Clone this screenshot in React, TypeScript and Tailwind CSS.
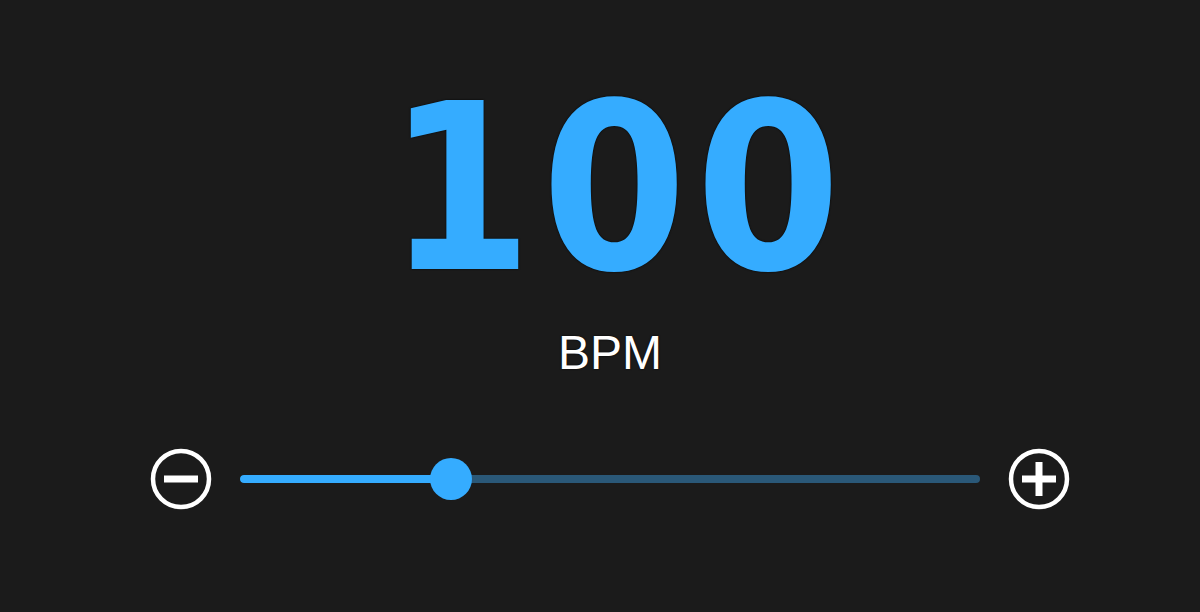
import React from "react";

export default function App() {
  const min = 40;
  const max = 250;
  const value = 100;
  const pct = ((value - min) / (max - min)) * 100;
  return (
    <div className="w-[1200px] h-[612px] bg-[#1b1b1b] flex flex-col items-center overflow-hidden">
      <div
        className="mt-[73px] pl-[37px] text-[#35acff] font-bold leading-none tracking-[9px]"
        style={{ fontFamily: '"DejaVu Sans Condensed", "DejaVu Sans", sans-serif', fontSize: "232px", textShadow: "0 0 2px #000" }}
      >
        100
      </div>
      <div
        className="mt-[24px] pl-[20px] text-white text-[48px] leading-none"
        style={{ fontFamily: '"Liberation Sans", Arial, sans-serif', textShadow: "0 0 2px #000" }}
      >
        BPM
      </div>
      <div className="mt-[71px] ml-[20px] flex items-center gap-[28px]">
        <button className="w-[62px] h-[62px] flex items-center justify-center">
          <svg width="62" height="62" viewBox="0 0 62 62">
            <circle cx="31" cy="31" r="28" fill="none" stroke="#fff" strokeWidth="4.5" />
            <rect x="14" y="27.5" width="34" height="7" fill="#fff" />
          </svg>
        </button>
        <div className="relative w-[740px] h-[42px] flex items-center">
          <div className="w-full h-[8px] rounded-full bg-[#2a5878] overflow-hidden">
            <div className="h-full bg-[#35acff] rounded-full" style={{ width: `${pct}%` }} />
          </div>
          <div
            className="absolute top-0 w-[42px] h-[42px] rounded-full bg-[#35acff] -translate-x-1/2"
            style={{ left: `${pct}%` }}
          />
        </div>
        <button className="w-[62px] h-[62px] flex items-center justify-center">
          <svg width="62" height="62" viewBox="0 0 62 62">
            <circle cx="31" cy="31" r="28" fill="none" stroke="#fff" strokeWidth="4.5" />
            <rect x="14" y="27.5" width="34" height="7" fill="#fff" />
            <rect x="27.5" y="14" width="7" height="34" fill="#fff" />
          </svg>
        </button>
      </div>
    </div>
  );
}
